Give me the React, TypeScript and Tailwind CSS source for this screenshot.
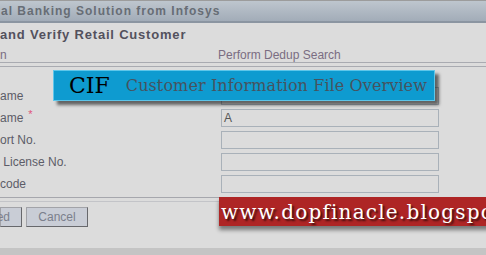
export default function App() {
  const rows = [
    { label: 'ame', star: false, value: '' },
    { label: 'ame', star: true, value: 'A' },
    { label: 'ort No.', star: false, value: '' },
    { label: ' License No.', star: false, value: '' },
    { label: 'code', star: false, value: '' },
  ]

  return (
    <div className="relative flex h-[255px] w-[486px] flex-col overflow-hidden bg-[#dcdcdc] font-['Liberation_Sans',Arial,sans-serif]">
      {/* app header */}
      <div className="flex h-[23px] items-center border-t border-b-2 border-t-[#9c9c9c] border-b-[#8b95a1] bg-gradient-to-b from-[#bec6ce] to-[#a2acb8] pl-px">
        <span className="whitespace-nowrap text-[12px] font-bold tracking-[1px] text-[#676d75]">
          al Banking Solution from Infosys
        </span>
      </div>

      {/* page title */}
      <div className="flex h-[24px] items-center">
        <h1 className="whitespace-nowrap text-[13px] font-bold tracking-[0.8px] text-[#53515d]">
          and Verify Retail Customer
        </h1>
      </div>

      {/* tabs */}
      <div className="flex h-[15px] items-center text-[12px] text-[#7a6d82]">
        <span className="w-[218px]">n</span>
        <span className="whitespace-nowrap">Perform Dedup Search</span>
      </div>
      <div className="h-[5px] border-y border-[#a9abb1]" />

      {/* form */}
      <div className="mt-[20px] grid grid-cols-[221px_218px] gap-y-[4px]">
        {rows.map((row, i) => (
          <div key={i} className="contents">
            <div className="flex h-[18px] items-center whitespace-pre text-[12px] text-[#5c5c68]">
              {row.label}
              {row.star && <span className="ml-[5px] -mt-[8px] text-[11px] text-[#e0567a]">*</span>}
            </div>
            <div className="flex h-[18px] items-center border border-[#a9b1b9] bg-[#dcdcdc] pl-[2px] text-[12px] text-[#555]">
              {row.value}
            </div>
          </div>
        ))}
      </div>

      <div className="mt-[4px] h-[5px] border-t border-b border-t-[#a6a7ad] border-b-[#c3c4c8]" />

      {/* actions */}
      <div className="mt-[5px] flex gap-[4px]">
        <button className="flex h-[20px] w-[22px] items-center justify-end border border-[#a2a3a8] border-r-[#67686c] border-b-[#67686c] bg-[#c9cdd6] pr-[11px] text-[12px] text-[#7b7f8c]">
          ed
        </button>
        <button className="flex h-[20px] w-[62px] items-center justify-center border border-[#a2a3a8] border-r-[#67686c] border-b-[#67686c] bg-[#c9cdd6] text-[12px] text-[#7b7f8c]">
          Cancel
        </button>
      </div>

      <div className="mt-auto h-[7px] bg-[#c4c4c4]" />

      {/* watermark banners over the page */}
      <div className="absolute left-[53px] top-[70px] flex h-[31px] w-[382px] items-center border border-[#5ec6ea] bg-[#0e9bd0] pl-[15px] shadow-[4px_4px_3px_rgba(0,0,0,0.55)] font-['DejaVu_Serif',serif]">
        <span className="text-[22px] leading-none text-black">CIF</span>
        <span className="ml-[16px] whitespace-nowrap text-[16px] leading-none tracking-[0.1px] text-[#46535f]">
          Customer Information File Overview
        </span>
      </div>

      <div className="absolute left-[219px] top-[197px] flex h-[29px] w-[290px] items-center bg-[#ae2525] pl-[2px] shadow-[0_4px_4px_rgba(0,0,0,0.45)] font-['DejaVu_Serif',serif]">
        <span className="whitespace-nowrap text-[20px] leading-none tracking-[1.2px] text-white [text-shadow:2px_2px_2px_rgba(0,0,0,0.65)]">
          www.dopfinacle.blogspot.com
        </span>
      </div>
    </div>
  )
}
